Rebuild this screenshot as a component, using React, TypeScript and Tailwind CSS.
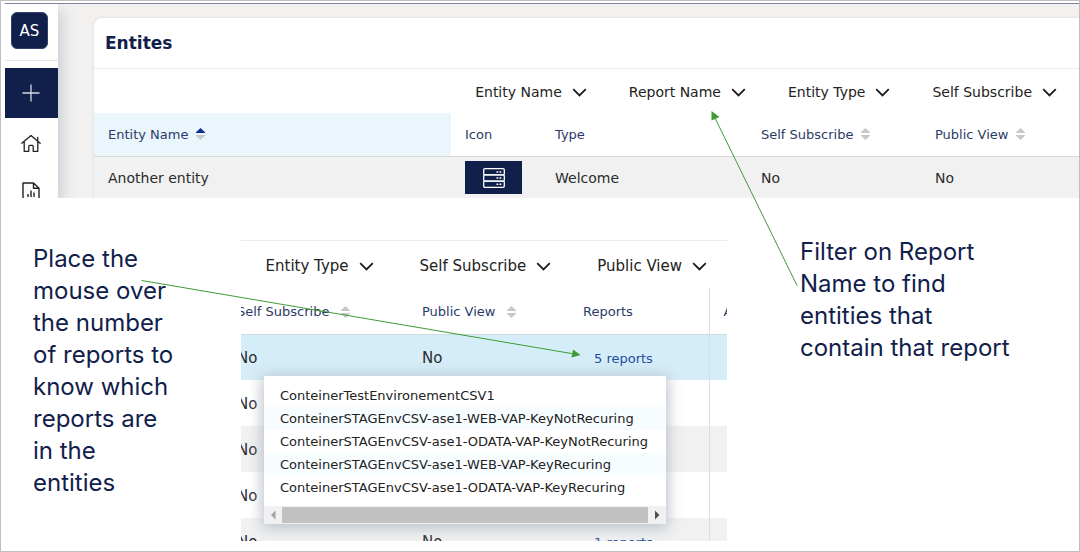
import type { ReactNode } from "react";

function Chevron() {
  return (
    <svg className="h-[9px] w-[15px] shrink-0" viewBox="0 0 15 9" fill="none" stroke="#1c1c1c" strokeWidth="1.8" aria-hidden="true">
      <path d="M1.2 1.2 7.5 7.4 13.8 1.2" />
    </svg>
  );
}

function SortIcon({ active = false }: { active?: boolean }) {
  return (
    <svg className="h-3 w-[9px] shrink-0" viewBox="0 0 9 12" aria-hidden="true">
      <path d="M4.5 0 9 4.2V5H0v-.8z" fill={active ? "#0a2f8f" : "#c8c8c8"} />
      <path d="M4.5 12 9 7.8V7H0v.8z" fill="#c8c8c8" />
    </svg>
  );
}

function Filter({ children }: { children: ReactNode }) {
  return (
    <button type="button" className="flex items-center gap-2.5 whitespace-nowrap">
      {children}
      <Chevron />
    </button>
  );
}

function Sortable({ children, active, wide }: { children: ReactNode; active?: boolean; wide?: boolean }) {
  return (
    <button type="button" className={`flex items-center whitespace-nowrap ${wide ? "gap-3" : "gap-2"}`}>
      {children}
      <SortIcon active={active} />
    </button>
  );
}

function Sidebar() {
  return (
    <nav className="z-10 flex w-[53px] shrink-0 flex-col items-center bg-white shadow-[4px_6px_14px_0_#c6cdd3]">
      <div className="flex h-[57px] w-full shrink-0 justify-center border-b border-[#e8e8e8] pr-1 pt-2">
        <div className="flex h-[37px] w-[37px] items-center justify-center rounded-md border border-[#33416a] bg-[#11204b] pt-0.5 text-[15px] text-white">AS</div>
      </div>
      <button type="button" aria-label="Add" className="mt-[7px] flex h-[50px] w-full shrink-0 items-center justify-center bg-[#11204b] pr-0.5">
        <svg className="h-[18px] w-[18px]" viewBox="0 0 18 18" stroke="#d5d8e2" strokeWidth="1.3" aria-hidden="true">
          <path d="M9 .5v17M.5 9h17" />
        </svg>
      </button>
      <a href="#home" aria-label="Home" className="mt-4 shrink-0 pr-0.5">
        <svg className="h-5 w-5" viewBox="0 0 20 20" fill="none" stroke="#222" strokeWidth="1.3" strokeLinejoin="round" strokeLinecap="round" aria-hidden="true">
          <path d="M.8 9.200 10 1.500l9.200 7.700M3.200 7.800v9.500h4.600v-5a1 1 0 0 1 1-1h2.400a1 1 0 0 1 1 1v5h4.600V7.800M16.800 6.500V3.500" />
        </svg>
      </a>
      <a href="#reports" aria-label="Reports" className="mt-7 shrink-0 pr-0.5">
        <svg className="h-5 w-[18px]" viewBox="0 0 18 20" fill="none" stroke="#222" strokeWidth="1.4" strokeLinejoin="round" aria-hidden="true">
          <path d="M1 1h10.5L17 6.2V19H1zM11.500 1v5.200H17M6 15v-3M9 15V8.500M12 15v-4.500" />
        </svg>
      </a>
    </nav>
  );
}

function EntitiesPanel() {
  return (
    <section className="flex h-[195px] overflow-hidden border-t border-[#80819f] bg-[#f2f1f0]">
      <Sidebar />
      <div className="ml-9 mt-3.5 min-w-0 flex-1 overflow-hidden rounded-tl-lg bg-white shadow-[0_0_3px_#d5d5d5]">
        <h1 className="flex h-[51px] items-center border-b border-[#ececec] px-[11px] pt-0.5 text-[17px] font-bold text-[#11204b]">Entites</h1>
        <div className="flex h-11 items-center justify-end gap-[42px] pr-[22px] pt-0.5 text-[14px] text-[#222]">
          <Filter>Entity Name</Filter>
          <Filter>Report Name</Filter>
          <Filter>Entity Type</Filter>
          <Filter>Self Subscribe</Filter>
        </div>
        <table className="w-full table-fixed border-collapse text-left">
          <colgroup>
            <col className="w-[357px]" />
            <col className="w-[90px]" />
            <col className="w-[206px]" />
            <col className="w-[174px]" />
            <col />
          </colgroup>
          <thead>
            <tr className="h-[43px] border-b border-[#d9d9d9] text-[13px] text-[#2b3b68] *:px-3.5 *:font-normal">
              <th className="bg-[#eaf6fc]"><Sortable active>Entity Name</Sortable></th>
              <th>Icon</th>
              <th>Type</th>
              <th><Sortable>Self Subscribe</Sortable></th>
              <th><Sortable>Public View</Sortable></th>
            </tr>
          </thead>
          <tbody>
            <tr className="h-[43px] bg-[#f1f1f1] text-[14px] text-[#2b2b2b] *:px-3.5">
              <td className="pt-0.5">Another entity</td>
              <td>
                <div className="flex h-[33px] w-[57px] items-center justify-center bg-[#11204b]">
                  <svg className="h-5 w-[22px]" viewBox="0 0 22 20" fill="none" stroke="#fff" strokeWidth="1.3" aria-hidden="true">
                    <rect x=".7" y=".7" width="20.600" height="6.200" rx="1.200" />
                    <rect x=".7" y="6.900" width="20.600" height="6.200" rx="1.200" />
                    <rect x=".7" y="13.100" width="20.600" height="6.200" rx="1.200" />
                    <path d="M13.500 4h1.800M16.500 4h1.800M13.500 10h1.800M16.500 10h1.800M13.500 16.200h1.800M16.500 16.200h1.800" strokeWidth="1.600" />
                  </svg>
                </div>
              </td>
              <td className="pt-0.5">Welcome</td>
              <td className="pt-0.5">No</td>
              <td className="pt-0.5">No</td>
            </tr>
          </tbody>
        </table>
      </div>
    </section>
  );
}

const rows = [
  { tone: "bg-[#d5edf8]", subscribe: "No", publicView: "No", reports: "5 reports" },
  { tone: "bg-white", subscribe: "No", publicView: "", reports: "" },
  { tone: "bg-[#f1f1f1]", subscribe: "No", publicView: "", reports: "" },
  { tone: "bg-white", subscribe: "No", publicView: "", reports: "" },
  { tone: "bg-[#f1f1f1]", subscribe: "No", publicView: "No", reports: "1 reports" },
];

const reportNames = [
  "ConteinerTestEnvironementCSV1",
  "ConteinerSTAGEnvCSV-ase1-WEB-VAP-KeyNotRecuring",
  "ConteinerSTAGEnvCSV-ase1-ODATA-VAP-KeyNotRecuring",
  "ConteinerSTAGEnvCSV-ase1-WEB-VAP-KeyRecuring",
  "ConteinerSTAGEnvCSV-ase1-ODATA-VAP-KeyRecuring",
];

function ReportsPopup() {
  return (
    <div role="tooltip" className="absolute left-[23px] top-[135px] w-[402px] bg-white text-[13px] text-[#222] shadow-[0_2px_14px_2px_#b9c1ca]">
      <ul className="overflow-hidden pb-[7px] pt-2">
        {reportNames.map((name) => (
          <li key={name} className="h-[23px] whitespace-nowrap pl-4 leading-[23px] even:bg-[#f7fcff]">{name}</li>
        ))}
      </ul>
      <div className="flex h-[18px] items-center bg-[#f1f1f1]">
        <svg className="h-[18px] w-[18px]" viewBox="0 0 18 18" fill="#a3a3a3" aria-hidden="true"><path d="M11.500 4.500v9L7 9z" /></svg>
        <div className="h-4 flex-1 bg-[#c1c1c1]" />
        <svg className="h-[18px] w-[18px]" viewBox="0 0 18 18" fill="#505050" aria-hidden="true"><path d="M7 4.500v9L11.500 9z" /></svg>
      </div>
    </div>
  );
}

function ReportsPanel() {
  return (
    <section className="relative mt-[42px] h-[301px] w-[486px] shrink-0 overflow-hidden border-t border-[#ececec] bg-white">
      <div className="flex h-[47px] items-center justify-end gap-[46px] pr-5 pt-[3px] text-[15px] text-[#222]">
        <Filter>Entity Type</Filter>
        <Filter>Self Subscribe</Filter>
        <Filter>Public View</Filter>
      </div>
      <table className="-ml-[18px] w-[563px] table-fixed border-collapse text-left">
        <colgroup>
          <col className="w-[185px]" />
          <col className="w-[161px]" />
          <col className="w-[140px]" />
          <col />
        </colgroup>
        <thead>
          <tr className="h-[46px] border-b border-[#cfdbe0] text-[13px] text-[#2b3b68] *:px-3.5 *:pt-0.5 *:font-normal">
            <th><Sortable wide>Self Subscribe</Sortable></th>
            <th><Sortable wide>Public View</Sortable></th>
            <th className="border-r border-r-[#dcdfe2]">Reports</th>
            <th>Actions</th>
          </tr>
        </thead>
        <tbody>
          {rows.map((row, i) => (
            <tr key={i} className={`h-[46px] text-[15px] text-[#2b2b2b] *:px-3.5 *:pt-0.5 ${row.tone}`}>
              <td>{row.subscribe}</td>
              <td>{row.publicView}</td>
              <td className="border-r border-r-[#dcdfe2]">
                {row.reports && <a href="#reports" className="ml-[11px] text-[13px] text-[#1d4b9f]">{row.reports}</a>}
              </td>
              <td />
            </tr>
          ))}
        </tbody>
      </table>
      <ReportsPopup />
    </section>
  );
}

function Arrows() {
  return (
    <svg className="pointer-events-none absolute -left-px -top-px z-20 h-[552px] w-[1080px]" viewBox="0 0 1080 552" fill="#3f9b35" stroke="#3f9b35" aria-hidden="true">
      <path d="M797 285.500 715 118M141.500 280.500 572 353.600" fill="none" />
      <path d="M711.500 111 719.500 117 711.500 120.500zM580.500 355 571.500 357.500 573 349.500z" stroke="none" />
    </svg>
  );
}

export default function App() {
  return (
    <main className="relative min-h-screen border border-[#bfbfbf] bg-white font-['DejaVu_Sans',sans-serif]">
      <div className="pl-1 pt-0.5">
        <EntitiesPanel />
      </div>
      <div className="flex items-start">
        <p className="w-60 shrink-0 pl-8 pt-[45px] font-['Inter',sans-serif] text-[24px] leading-[32px] text-[#11204b]">
          Place the<br />mouse over<br />the number<br />of reports to<br />know which<br />reports are<br />in the<br />entities
        </p>
        <ReportsPanel />
        <p className="flex-1 pl-[73px] pt-[38px] font-['Inter',sans-serif] text-[24px] leading-[32px] text-[#11204b]">
          Filter on Report<br />Name to find<br />entities that<br />contain that report
        </p>
      </div>
      <Arrows />
    </main>
  );
}
